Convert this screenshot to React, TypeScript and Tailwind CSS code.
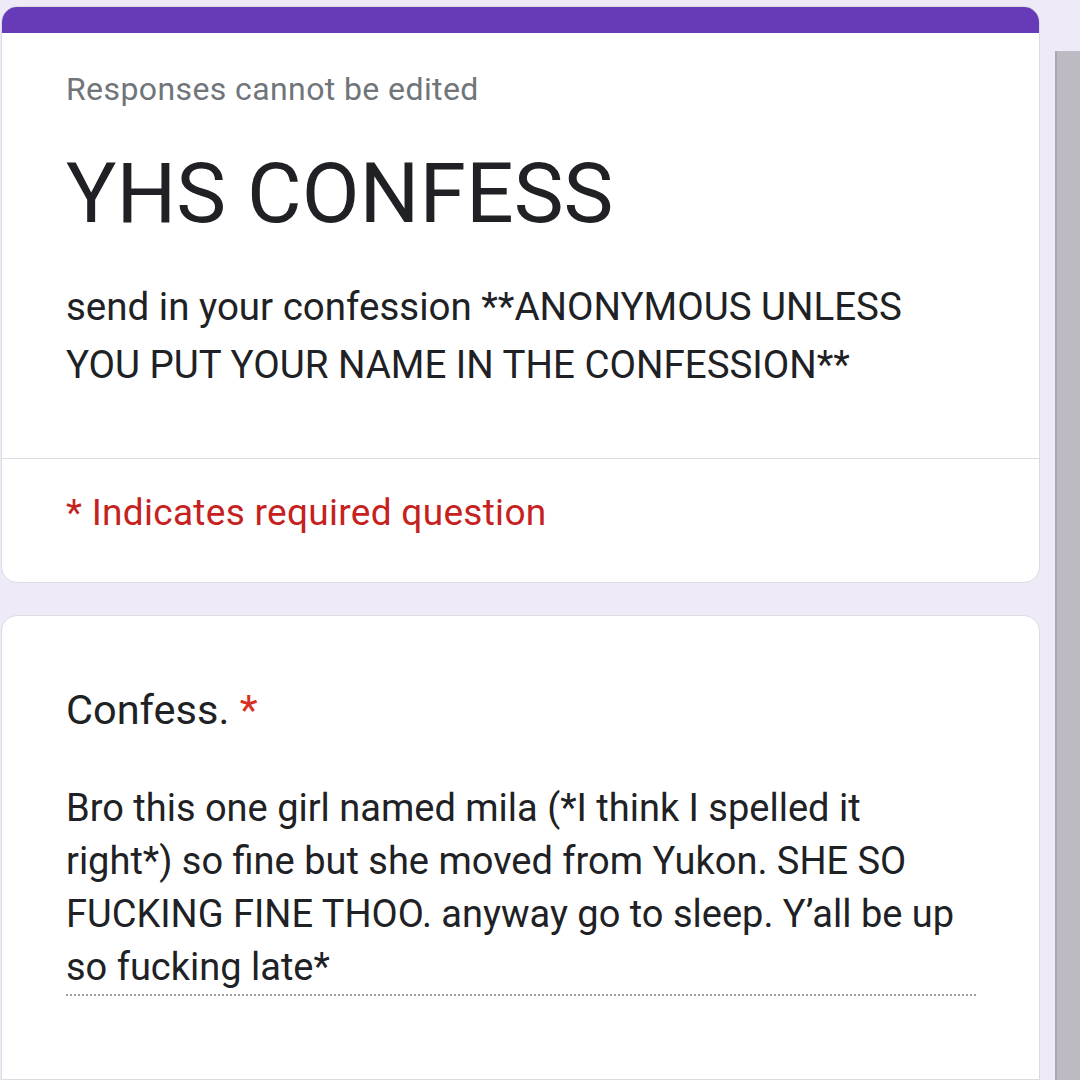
import React from "react";

const bodyLines = [
  "Bro this one girl named mila (*I think I spelled it",
  "right*) so fine but she moved from Yukon. SHE SO",
  "FUCKING FINE THOO. anyway go to sleep. Y\u2019all be up",
  "so fucking late*",
];

export default function App() {
  return (
    <div
      className="flex h-[1080px] w-[1080px] overflow-hidden bg-[#eeeaf7]"
      style={{ fontFamily: "Roboto, 'Noto Sans', sans-serif" }}
    >
      <div className="ml-[1px] flex w-[1039px] flex-col">
        {/* header card */}
        <div className="mt-[6px] overflow-hidden rounded-[16px] border border-[#dadce0] bg-white">
          <div className="h-[26px] bg-[#673ab7]" />
          <div className="px-[64px] pt-[38px] pb-[64px]">
            <p className="text-[32px] leading-[36px] tracking-[0.4px] text-[#70757a]">
              Responses cannot be edited
            </p>
            <h1 className="mt-[37px] text-[84px] leading-[100px] text-[#202124]">
              YHS CONFESS
            </h1>
            <p className="mt-[34px] text-[38.5px] leading-[58px] text-[#202124]">
              send in your confession **ANONYMOUS UNLESS
              <br />
              YOU PUT YOUR NAME IN THE CONFESSION**
            </p>
          </div>
          <div className="h-px bg-[#dadce0]" />
          <div className="px-[64px] pt-[32px] pb-[47px]">
            <p className="text-[37px] leading-[44px] tracking-[0.3px] text-[#c5221f]">
              * Indicates required question
            </p>
          </div>
        </div>

        {/* question card */}
        <div className="mt-[32px] flex-1 rounded-t-[16px] border border-[#dadce0] bg-white px-[64px] pt-[68px]">
          <p className="text-[41.5px] leading-[52px] text-[#202124]">
            Confess. <span className="text-[#d93025]">*</span>
          </p>
          <div className="mt-[46px] w-[910px] border-b-2 border-dotted border-[#9aa0a6]">
            {bodyLines.map((l) => (
              <p key={l} className="text-[38px] leading-[53px] text-[#202124]">
                {l}
              </p>
            ))}
          </div>
        </div>
      </div>

      {/* scrollbar */}
      <div className="ml-[15px] mt-[51px] flex-1 border-l-2 border-[#aaa7b2] bg-[#bdbac4]" />
    </div>
  );
}
